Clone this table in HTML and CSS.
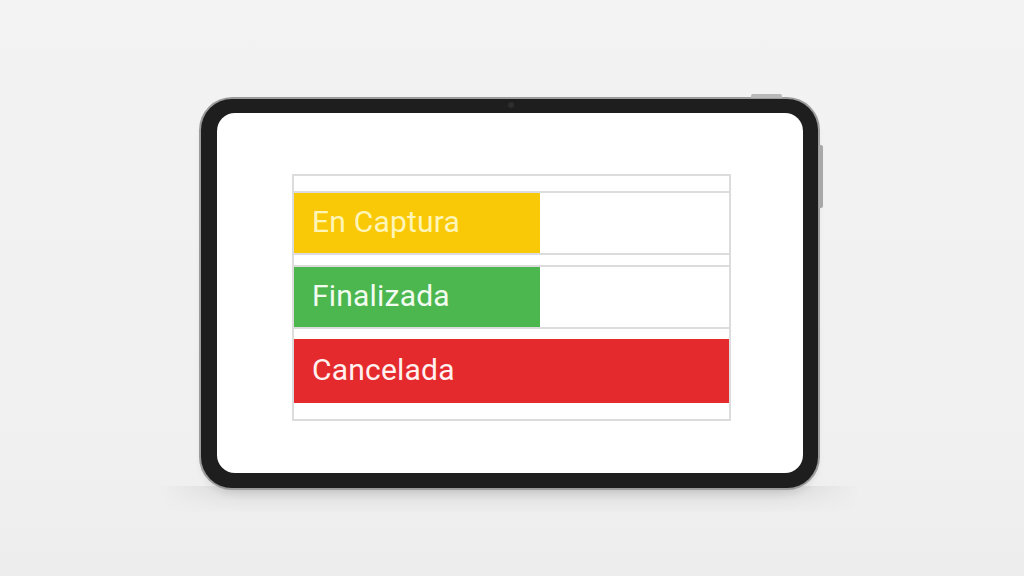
FILE: index.html
```html
<!DOCTYPE html>
<html lang="es">
<head>
<meta charset="utf-8">
<title>Estados</title>
<link rel="stylesheet" href="styles.css">
</head>
<body>
<div class="stage">
  <div class="tablet">
    <span class="floor"></span>
    <span class="btn-top"></span>
    <span class="btn-side"></span>
    <span class="camera"></span>
    <div class="bezel">
      <div class="screen">
        <div class="status-table">
          <div class="spacer spacer-top"></div>
          <div class="row">
            <div class="bar bar-yellow" style="width: 56.6%">En Captura</div>
          </div>
          <div class="spacer"></div>
          <div class="row">
            <div class="bar bar-green" style="width: 56.6%">Finalizada</div>
          </div>
          <div class="spacer"></div>
          <div class="row row-red">
            <div class="bar bar-red" style="width: 100%">Cancelada</div>
          </div>
          <div class="spacer spacer-bottom"></div>
        </div>
      </div>
    </div>
  </div>
</div>
</body>
</html>
```

FILE: styles.css
```css
* { box-sizing: border-box; }

html, body {
  margin: 0;
  padding: 0;
}

body {
  width: 1024px;
  height: 576px;
  overflow: hidden;
  background: linear-gradient(#f3f3f3, #f0f0f0 80%, #ededed);
  font-family: Roboto, "Noto Sans", "Liberation Sans", sans-serif;
}

.stage {
  display: flex;
  padding: 97px 0 0 199px;
}

.tablet {
  position: relative;
  width: 621px;
  height: 393px;
  border-radius: 33px;
  background: #9c9c9c;
  padding: 2px;
  box-shadow: 0 6px 8px -4px rgba(0, 0, 0, 0.12);
}

.floor {
  position: absolute;
  top: calc(100% - 4px);
  left: -40px;
  right: -40px;
  height: 28px;
  background: linear-gradient(rgba(0, 0, 0, 0.10), rgba(0, 0, 0, 0.03) 60%, rgba(0, 0, 0, 0));
  -webkit-mask-image: linear-gradient(90deg, transparent, #000 12%, #000 88%, transparent);
  mask-image: linear-gradient(90deg, transparent, #000 12%, #000 88%, transparent);
  z-index: -1;
}

.bezel {
  position: relative;
  height: 100%;
  border-radius: 31px;
  background: #1e1e1e;
  padding: 14px 15px 15px 16px;
}

.screen {
  height: 100%;
  background: #ffffff;
  border-radius: 18px;
  padding: 61px 70px 0 75px;
}

.btn-top {
  position: absolute;
  top: -3px;
  left: 552px;
  width: 31px;
  height: 4px;
  border-radius: 2px 2px 0 0;
  background: #b9b9b9;
}

.btn-side {
  position: absolute;
  top: 48px;
  right: -3px;
  width: 4px;
  height: 63px;
  border-radius: 0 2px 2px 0;
  background: #a8a8a8;
}

.camera {
  position: absolute;
  top: 5px;
  left: 309px;
  width: 6px;
  height: 6px;
  border-radius: 50%;
  background: #2e2e2e;
  z-index: 1;
}

.status-table {
  width: 439px;
  border: 2px solid #dcdcdc;
  display: flex;
  flex-direction: column;
}

.spacer {
  height: 12px;
  border-bottom: 2px solid #dcdcdc;
}

.spacer-top {
  height: 17px;
}

.spacer-bottom {
  height: 16px;
  border-bottom: none;
}

.row {
  height: 62px;
  border-bottom: 2px solid #dcdcdc;
  display: flex;
}

.row-red {
  border-bottom: none;
}

.spacer + .row-red {
  margin-top: -2px;
  height: 64px;
}

.bar {
  display: flex;
  align-items: center;
  padding: 0 0 4px 18px;
  font-size: 30px;
  letter-spacing: 0.2px;
  height: 100%;
}

.bar-yellow {
  background: #f9c806;
  color: #fff5b8;
}

.bar-green {
  background: #4cb64f;
  color: #f1fbef;
}

.bar-red {
  background: #e52a2d;
  color: #fff1f0;
}
```
